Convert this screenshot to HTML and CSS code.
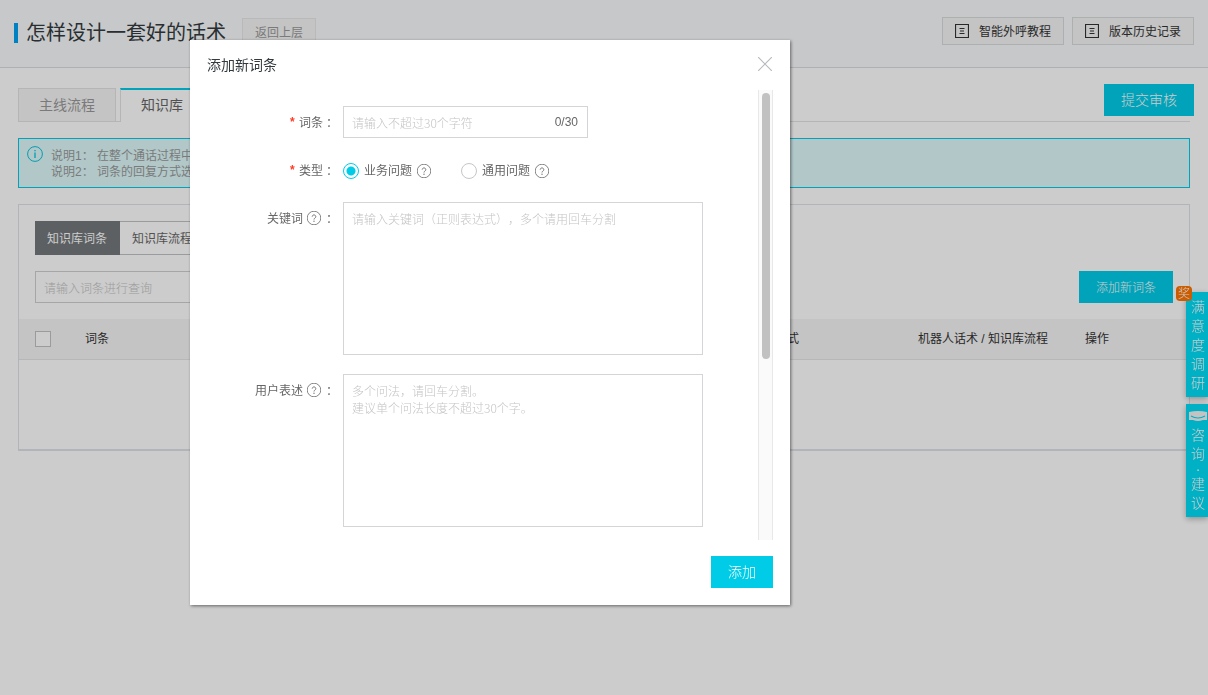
FILE: index.html
```html
<!DOCTYPE html>
<html lang="zh-CN">
<head>
<meta charset="utf-8">
<title>怎样设计一套好的话术</title>
<meta name="viewport" content="width=device-width, initial-scale=1">
<link rel="stylesheet" href="styles.css">
</head>
<body>
<svg class="defs" aria-hidden="true">
  <symbol id="help" viewBox="0 0 14 14"><circle cx="7" cy="7" r="6.8" fill="none" stroke="currentColor" stroke-width="0.9"/><path d="M5.2 5.6a1.8 1.7 0 1 1 2.7 1.5Q7 7.6 7 8.5" fill="none" stroke="currentColor"/><circle cx="7" cy="10.2" r="0.7" fill="currentColor"/></symbol>
  <symbol id="doc" viewBox="0 0 14 14"><path d="M0.5 0.5h13v13h-13z" fill="none" stroke="currentColor" stroke-width="1.2"/><path d="M4.5 4.5h5M5 7h4M4.5 9.5h5" stroke="currentColor" stroke-width="1"/></symbol>
</svg>

<header class="page-header">
  <h1 class="page-title">怎样设计一套好的话术</h1>
  <button class="back-button" type="button">返回上层</button>
  <div class="header-actions">
    <button class="header-button" type="button"><svg class="doc-icon"><use href="#doc"/></svg><span class="button-text">智能外呼教程</span></button>
    <button class="header-button" type="button"><svg class="doc-icon"><use href="#doc"/></svg><span class="button-text">版本历史记录</span></button>
  </div>
</header>

<main class="content">
  <div class="tab-bar">
    <nav class="tabs">
      <button class="tab" type="button">主线流程</button>
      <button class="tab tab-active" type="button">知识库</button>
    </nav>
    <button class="primary submit" type="button">提交审核</button>
  </div>

  <section class="notice">
    <svg class="info-icon" viewBox="0 0 16 16"><circle cx="8" cy="8" r="7.4" fill="none" stroke="currentColor"/><path d="M8 6.5V12M8 4v1.3" stroke="currentColor" stroke-width="1.3"/></svg>
    <div class="notice-text">
      <p>说明1<span class="colon">：</span> 在整个通话过程中</p>
      <p>说明2<span class="colon">：</span> 词条的回复方式选</p>
    </div>
  </section>

  <section class="card">
    <div class="segments">
      <button class="segment segment-active" type="button">知识库词条</button>
      <button class="segment" type="button">知识库流程</button>
    </div>
    <div class="search-row">
      <input class="text-input search" type="text" aria-label="查询词条" placeholder="请输入词条进行查询">
      <button class="primary add-entry" type="button">添加新词条</button>
    </div>
    <table class="entries">
      <thead>
        <tr>
          <th class="col-check"><input class="check" type="checkbox" aria-label="全选"></th>
          <th>词条</th>
          <th class="col-mode">回复方式</th>
          <th class="col-flow">机器人话术 / 知识库流程</th>
          <th class="col-action">操作</th>
        </tr>
      </thead>
    </table>
  </section>
</main>

<aside class="side-dock">
  <button class="dock-button" type="button"><span class="badge">奖</span>满意度调研</button>
  <button class="dock-button" type="button">
    <svg class="chat-icon" viewBox="0 0 18 10"><path d="M0 1Q9-1 18 1V9H14Q9 11 4 9H0z" fill="#f4f4f4"/><path d="M2 5Q9 9 16 5" fill="none" stroke="#00dcf5" stroke-width="1.2"/></svg>
    <span>咨询</span><span class="dot">·</span><span>建议</span>
  </button>
</aside>

<div class="overlay">
  <div class="modal" role="dialog" aria-labelledby="dialog-title">
    <div class="modal-header">
      <h2 class="modal-title" id="dialog-title">添加新词条</h2>
      <button class="close" type="button" aria-label="关闭"><svg viewBox="0 0 14 14"><path d="M0 0l14 14M14 0L0 14" stroke="currentColor" stroke-width="1.2"/></svg></button>
    </div>
    <div class="modal-body">
      <form class="form" id="entry-form">
        <label class="label" for="entry"><span class="required">*</span>词条<span class="colon">：</span></label>
        <div class="text-input counted"><input class="bare" id="entry" type="text" maxlength="30" placeholder="请输入不超过30个字符"><span class="count">0/30</span></div>

        <span class="label" id="type-label"><span class="required">*</span>类型<span class="colon">：</span></span>
        <div class="radios" role="radiogroup" aria-labelledby="type-label">
          <label class="option"><input class="radio" type="radio" name="type" checked><span class="option-text">业务问题</span><svg class="help-icon"><use href="#help"/></svg></label>
          <label class="option"><input class="radio" type="radio" name="type"><span class="option-text">通用问题</span><svg class="help-icon"><use href="#help"/></svg></label>
        </div>

        <label class="label" for="keywords">关键词<svg class="help-icon"><use href="#help"/></svg><span class="colon">：</span></label>
        <textarea class="text-area" id="keywords" placeholder="请输入关键词（正则表达式），多个请用回车分割"></textarea>

        <label class="label" for="phrases">用户表述<svg class="help-icon"><use href="#help"/></svg><span class="colon">：</span></label>
        <textarea class="text-area" id="phrases" placeholder="多个问法，请回车分割。&#10;建议单个问法长度不超过30个字。"></textarea>
      </form>
      <div class="scroll-track"><div class="scroll-thumb"></div></div>
    </div>
    <div class="modal-footer"><button class="primary confirm" type="submit" form="entry-form">添加</button></div>
  </div>
</div>
</body>
</html>
```

FILE: styles.css
```css
* { box-sizing: border-box; }
body, button, input, textarea {
  font-family: "Liberation Sans", "Noto Sans CJK SC", sans-serif;
  font-size: 12px;
}
body { margin: 0; min-height: 100vh; background: #fff; color: #73777a; }
h1, h2, p { margin: 0; font-weight: 400; }
button { margin: 0; padding: 0 0 2px; border: 0; border-radius: 0; color: inherit; white-space: nowrap; cursor: pointer; }
input, textarea { margin: 0; border-radius: 0; outline: none; color: #333; font-family: "Noto Sans CJK SC", sans-serif; text-spacing-trim: space-all; }
::placeholder { color: #c4c4c4; font-weight: 300; opacity: 1; }
.defs { position: absolute; width: 0; height: 0; }
.colon { font-family: "Noto Sans CJK TC", sans-serif; }

.page-header {
  display: flex; align-items: flex-start; height: 68px; padding: 17px 14px 0;
  background: #f9fafc; border-bottom: 1px solid #d9dee2;
}
.page-title {
  display: flex; align-items: center; height: 32px; margin-right: 16px;
  color: #333a3e; font-size: 20px; line-height: 32px; white-space: nowrap;
}
.page-title::before { content: ""; width: 4px; height: 20px; margin-right: 8px; background: #00a2f3; }
.back-button { width: 74px; height: 28px; margin-top: 1px; background: #f5f5f5; border: 1px solid #e8e8e8; color: #999; }
.header-actions { display: flex; gap: 8px; margin-left: auto; }
.header-button {
  display: flex; align-items: center; gap: 10px; height: 28px; padding: 0 12px;
  background: #f5f5f5; border: 1px solid #d9dcde; color: #333;
}
.button-text { padding-bottom: 2px; }
.doc-icon { width: 14px; height: 14px; }

.content { padding: 16px 18px; }
.primary { background: #00cce8; color: #fff; font-weight: 300; }
.tab-bar { display: flex; justify-content: space-between; height: 38px; border-bottom: 1px solid #e3e3e3; }
.tabs { display: flex; gap: 4px; padding-top: 4px; margin-bottom: -1px; }
.tab { height: 34px; padding: 0 20px 2px; background: #f5f5f5; border: 1px solid #e3e3e3; color: #999; font-size: 14px; }
.tab-active { padding: 0 20px 4px; background: #fff; border-top: 2px solid #00cce8; border-bottom: 0; color: #666; }
.submit { width: 90px; height: 32px; margin-right: -4px; font-size: 14px; }
.notice {
  display: flex; gap: 8px; height: 50px; margin-top: 16px; padding: 7px 8px;
  background: #def9fb; border: 1px solid #00cce8; color: #999; line-height: 16px;
}
.notice-text { padding-top: 1px; }
.notice p { white-space: pre; line-height: 16px; height: 16px; }
.info-icon { flex: none; width: 16px; height: 16px; color: #00c7e0; }

.card { min-height: 247px; margin-top: 16px; padding-top: 16px; border: 1px solid #dee3e8; border-bottom-width: 2px; }
.segments { display: flex; padding: 0 16px; }
.segment { height: 34px; padding: 0 12px 2px; background: #fff; border: 1px solid #c0c3c5; border-left: 0; color: #666; }
.segment-active { background: #73787c; border-color: #73787c; color: #fff; }
.search-row { display: flex; justify-content: space-between; padding: 16px; }
.text-input { height: 32px; padding: 0 8px; background: #fff; border: 1px solid #d4d5d6; }
.search { width: 240px; border-color: #d0d0d0; }
.add-entry { width: 94px; height: 32px; }
.entries { width: 100%; table-layout: fixed; border-spacing: 0; background: #f5f5f5; }
.entries th { height: 41px; padding: 0 8px 3px; border-bottom: 1px solid #e3e6e8; color: #333; font-weight: 400; text-align: left; white-space: nowrap; }
.entries .col-check { width: 58px; padding: 0 0 0 16px; }
.col-mode, .col-flow { width: 167px; }
.col-action { width: 112px; }
.check { display: block; appearance: none; width: 16px; height: 16px; background: #fff; border: 1px solid #c0c3c5; }

.side-dock { position: fixed; top: 292px; right: 0; display: flex; flex-direction: column; gap: 7px; width: 22px; }
.dock-button {
  position: relative; display: flex; flex-direction: column; align-items: center; padding: 6px 3px 4px 5px;
  background: #00dcf5; box-shadow: 0 2px 6px rgba(0, 0, 0, .3);
  color: #fff; font-size: 14px; font-weight: 300; line-height: 19px; white-space: normal;
}
.badge {
  position: absolute; top: -6px; left: -10px; width: 16px; height: 15px;
  background: #ff7300; border-radius: 4px; font-size: 12px; line-height: 17px;
}
.chat-icon { flex: none; width: 18px; height: 10px; margin: 1px 0 5px; }
.dot { height: 11px; line-height: 11px; }

.overlay { position: fixed; inset: 0; padding: 40px 190px; background: rgba(0, 0, 0, .2); }
.modal { width: 600px; max-width: 100%; padding: 0 17px 17px; background: #fff; box-shadow: 1px 1px 3px rgba(0, 0, 0, .5); }
.modal-header { display: flex; align-items: center; justify-content: space-between; height: 50px; }
.modal-title { color: #333a3e; font-size: 14px; line-height: 20px; }
.close { width: 16px; height: 16px; background: none; color: #b8bbbd; }
.close svg { display: block; width: 14px; height: 14px; margin: 0 auto; }
.modal-body { display: flex; justify-content: space-between; height: 450px; }
.form {
  display: grid; grid-template-columns: 128px minmax(0, 360px); grid-template-rows: 32px 26px 153px 153px;
  flex: 1; column-gap: 8px; row-gap: 19px; padding-top: 16px;
}
.label { display: flex; align-items: center; justify-content: flex-end; height: 32px; padding-bottom: 2px; color: #666; }
.required { margin-right: 3px; padding-top: 4px; color: #ff3b26; font-family: "Liberation Mono", monospace; font-weight: 700; }
.label .help-icon { margin: 2px 2px 0 4px; }
.label .colon { padding-top: 2px; }
.help-icon { flex: none; width: 14px; height: 14px; color: #777; overflow: visible; }
.counted { display: flex; align-items: center; width: 245px; padding: 0 9px 0 8px; }
.bare { flex: 1; min-width: 0; padding: 0; border: 0; }
.count { color: #666; }
.radios, .form > #type-label { height: 26px; }
.radios { display: flex; align-items: center; gap: 30px; padding-top: 2px; }
.option { display: flex; align-items: center; gap: 5px; color: #666; }
.option-text { padding-bottom: 4px; }
.radio { appearance: none; width: 16px; height: 16px; border: 1px solid #c4c6c8; border-radius: 50%; background: #fff; }
.radio:checked { border-color: #00cce8; background: radial-gradient(circle, #00cce8 4px, #fff 5px); }
.text-area { display: block; width: 100%; height: 153px; padding: 7px 8px; border: 1px solid #d4d5d6; line-height: 17px; resize: none; }
.scroll-track { width: 15px; padding: 3px 0 0 3px; background: #fafafa; border: solid #e8e8e8; border-width: 0 1px; }
.scroll-thumb { width: 8px; height: 266px; background: #c1c1c1; border-radius: 4px; }
.modal-footer { display: flex; justify-content: flex-end; padding-top: 16px; }
.confirm { width: 62px; height: 32px; font-size: 14px; }
```
